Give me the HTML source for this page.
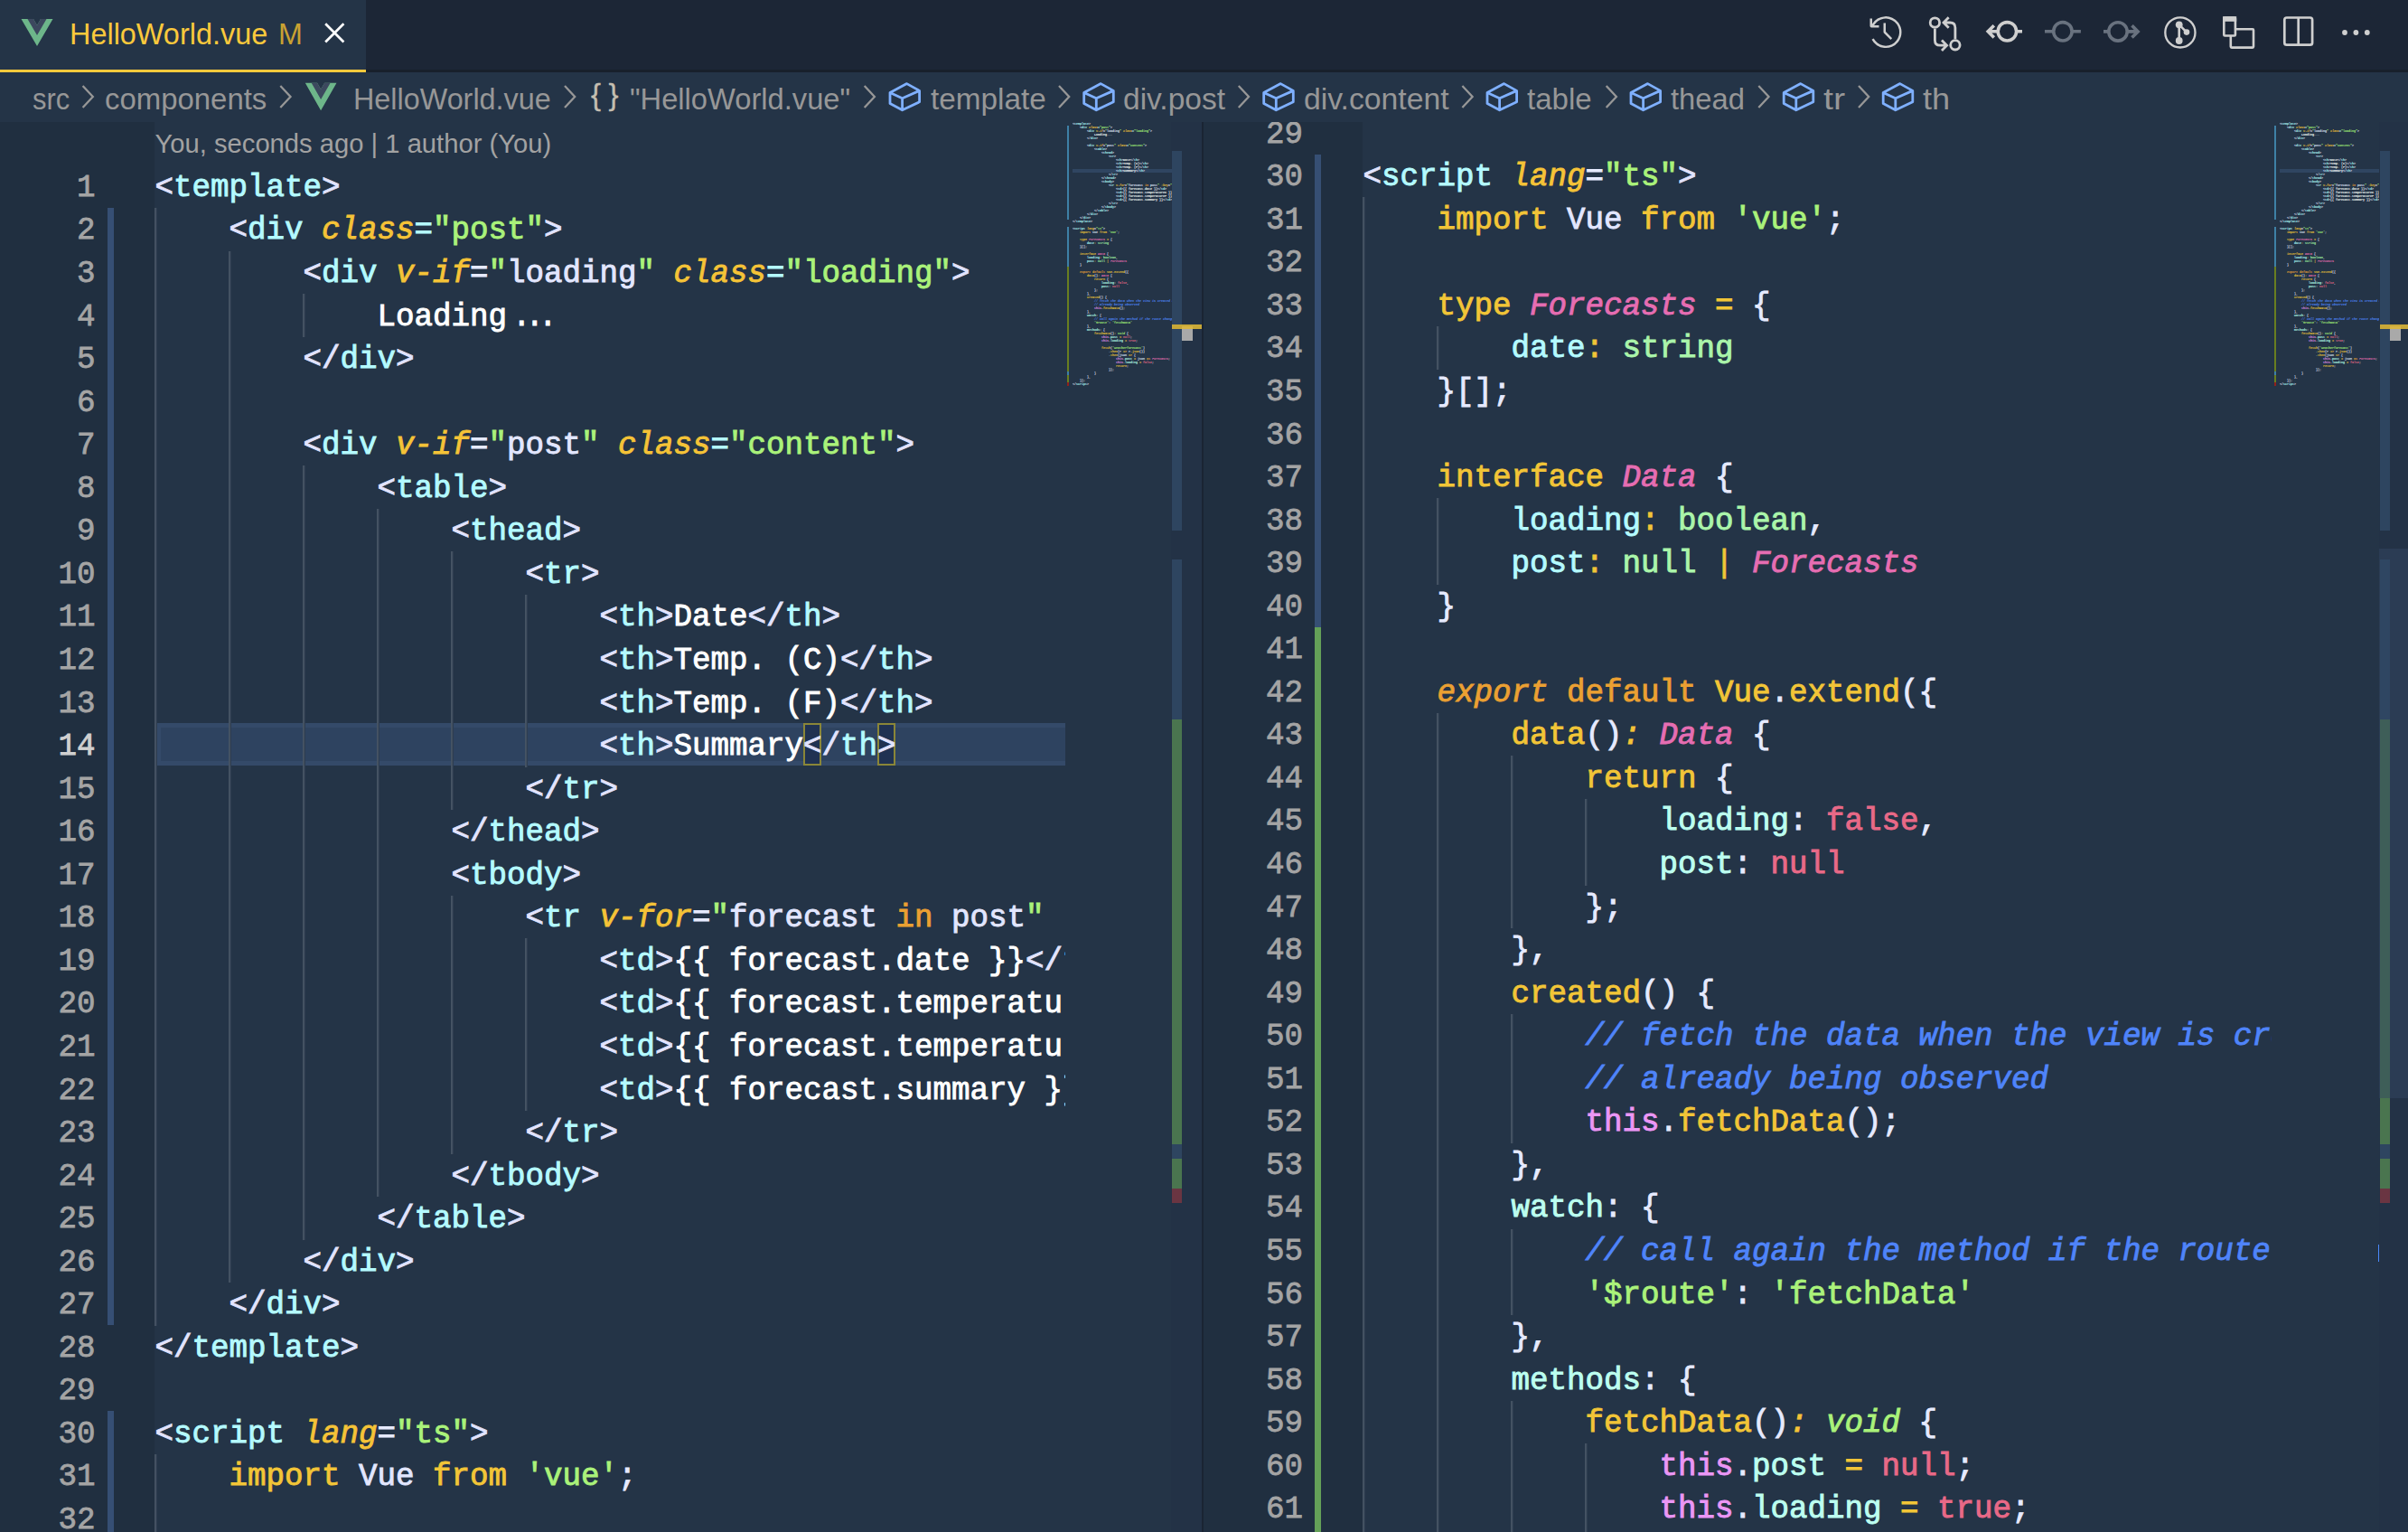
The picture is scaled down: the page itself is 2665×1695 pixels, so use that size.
<!DOCTYPE html><html><head><meta charset="utf-8"><title>HelloWorld.vue</title><style>
*{margin:0;padding:0;box-sizing:border-box}
html,body{width:2665px;height:1695px;overflow:hidden;background:#243447}
body{position:relative;font-family:"Liberation Sans",sans-serif}
.abs{position:absolute}
#tabbar{position:absolute;left:0;top:0;width:2665px;height:80px;background:#1c2636;border-bottom:3px solid #18202c}
#tab{position:absolute;left:0;top:0;width:405px;height:80px;background:#243447;border-bottom:3px solid #fbc93c}
#bc{position:absolute;left:0;top:80px;width:2665px;height:55px;background:#243447}
.ui{position:absolute;white-space:pre;transform-origin:0 50%;font-size:34px;line-height:40px;height:40px;color:#9a9a9a}
#ed{position:absolute;left:0;top:135px;width:2665px;height:1560px;overflow:hidden}
#ed>.in{position:absolute;left:0;top:-135px;width:2665px;height:1695px}
.gut{position:absolute;top:135px;height:1560px;background:#202f40}
.ln{position:absolute;height:47.55px;line-height:47.55px;padding-top:2.5px;-webkit-text-stroke:0.8px;text-align:right;font-family:"Liberation Mono",monospace;font-size:34.17px;color:#a4a4a4;white-space:pre}
.ln.act{color:#d0d0d0}
.gb{position:absolute}
.code{position:absolute;top:135px;height:1560px;overflow:hidden;font-family:"Liberation Mono",monospace;font-size:34.17px;color:#fff}
.cl{position:absolute;left:0.5px;height:47.55px;line-height:47.55px;white-space:pre;padding-top:2.5px;-webkit-text-stroke:0.9px}
.ig{position:absolute;width:3px;height:48.25px;background:linear-gradient(to right,#465464 0 1px,#414f60 1px 2px,#2e3d50 2px 3px)}
.hl{position:absolute;left:2px;right:0;height:47px;background:#2e4360;border:5px solid #344a69;border-right:none}
.bm{position:absolute;width:20px;height:47px;border:2px solid #8a8638;background:#203252}
.p{color:#e2e4ff} .t{color:#b4faff} .pr{color:#bcfff0} .a{color:#f5c337;font-style:italic} .s{color:#aaf27a} .w{color:#e6eaff} .x{color:#fff} .e{color:#e2e6ff}
.k{color:#f2c537} .o{color:#eba032} .oi{color:#eba032;font-style:italic} .ty{color:#e66db2;font-style:italic}
.bt{color:#aaf5aa} .c{color:#e86987} .th{color:#eb96f5} .cm{color:#4f84fa;font-style:italic} .vi{color:#aaf27a;font-style:italic}
.dots{letter-spacing:-6px;padding-left:6px}
.mm{position:absolute;height:1560px;overflow:hidden}
.mmi{position:absolute;left:0;top:0;transform-origin:0 0;transform:scale(0.09756,0.08412);font-family:"Liberation Mono",monospace;font-size:34.17px;font-weight:bold;color:#fff;width:2000px}
.ml{height:47.55px;line-height:47.55px;white-space:pre}
</style></head><body>
<div id="tabbar"></div><div id="tab"></div><div id="bc"></div>
<div class="ui" style="left:77.1px;top:17.1px;color:#fbc93c;transform:scaleX(0.9533)">HelloWorld.vue</div>
<div class="ui" style="left:307.8px;top:17.1px;color:#c9a232;transform:scaleX(0.9483)">M</div>
<div class="ui" style="left:35.8px;top:88.8px;color:#979797;transform:scaleX(0.9080)">src</div>
<div class="ui" style="left:116.1px;top:88.8px;color:#979797;transform:scaleX(0.9681)">components</div>
<div class="ui" style="left:391.2px;top:88.8px;color:#979797;transform:scaleX(0.9511)">HelloWorld.vue</div>
<div class="ui" style="left:697.2px;top:88.8px;color:#979797;transform:scaleX(0.9608)">&quot;HelloWorld.vue&quot;</div>
<div class="ui" style="left:1029.5px;top:88.8px;color:#979797;transform:scaleX(0.9796)">template</div>
<div class="ui" style="left:1243.2px;top:88.8px;color:#979797;transform:scaleX(0.9861)">div.post</div>
<div class="ui" style="left:1442.7px;top:88.8px;color:#979797;transform:scaleX(0.9917)">div.content</div>
<div class="ui" style="left:1690.3px;top:88.8px;color:#979797;transform:scaleX(0.9715)">table</div>
<div class="ui" style="left:1849.3px;top:88.8px;color:#979797;transform:scaleX(0.9625)">thead</div>
<div class="ui" style="left:2018.0px;top:88.8px;color:#979797;transform:scaleX(1.1606)">tr</div>
<div class="ui" style="left:2127.6px;top:88.8px;color:#979797;transform:scaleX(1.0637)">th</div>
<div class="ui" style="left:654px;top:84.5px;color:#c4beb0;letter-spacing:8.5px;font-size:33px;-webkit-text-stroke:0.35px">{}</div>
<svg class="abs" style="left:0;top:0" width="2665" height="135" viewBox="0 0 2665 135" fill="none" stroke-linecap="butt" stroke-linejoin="miter">
<path d="M45.0,21.0 L41.0,27.9 L37.0,21.0 L23.5,21.0 L41.0,51.0 L58.5,21.0 Z" fill="#6db68a"/><path d="M45.0,21.0 L41.0,27.9 L37.0,21.0 L30.5,21.0 L41.0,39.0 L51.5,21.0 Z" fill="#3c485e"/>
<path d="M359.2,91.8 L355.1,98.8 L351.1,91.8 L337.8,91.8 L355.1,122.2 L372.5,91.8 Z" fill="#6db68a"/><path d="M359.2,91.8 L355.1,98.8 L351.1,91.8 L344.7,91.8 L355.1,110.0 L365.6,91.8 Z" fill="#3c485e"/>
<path d="M360.2,26.3 L380.4,46.5 M380.4,26.3 L360.2,46.5" stroke="#fff" stroke-width="2.7"/>
<path d="M91.6,95 L102.8,107 L91.6,119" stroke="#979797" stroke-width="2.3"/>
<path d="M310.3,95 L321.5,107 L310.3,119" stroke="#979797" stroke-width="2.3"/>
<path d="M625.0,95 L636.2,107 L625.0,119" stroke="#979797" stroke-width="2.3"/>
<path d="M956.7,95 L967.9,107 L956.7,119" stroke="#979797" stroke-width="2.3"/>
<path d="M1172.0,95 L1183.2,107 L1172.0,119" stroke="#979797" stroke-width="2.3"/>
<path d="M1370.8,95 L1382.0,107 L1370.8,119" stroke="#979797" stroke-width="2.3"/>
<path d="M1618.4,95 L1629.6,107 L1618.4,119" stroke="#979797" stroke-width="2.3"/>
<path d="M1777.7,95 L1788.9,107 L1777.7,119" stroke="#979797" stroke-width="2.3"/>
<path d="M1946.3,95 L1957.5,107 L1946.3,119" stroke="#979797" stroke-width="2.3"/>
<path d="M2057.0,95 L2068.2,107 L2057.0,119" stroke="#979797" stroke-width="2.3"/>
<path d="M1003.6,92.6 L1017.6,100.4 L1017.6,112.8 L998.6,121.8 L985.0,114.5 L985.0,102.4 Z M985.0,102.4 L998.6,108.7 L1017.6,100.4 M998.6,108.7 L998.6,121.8" stroke="#7fb0ff" stroke-width="2.8" stroke-linejoin="round"/>
<path d="M1218.3,92.6 L1232.3,100.4 L1232.3,112.8 L1213.3,121.8 L1199.7,114.5 L1199.7,102.4 Z M1199.7,102.4 L1213.3,108.7 L1232.3,100.4 M1213.3,108.7 L1213.3,121.8" stroke="#7fb0ff" stroke-width="2.8" stroke-linejoin="round"/>
<path d="M1417.3,92.6 L1431.3,100.4 L1431.3,112.8 L1412.3,121.8 L1398.7,114.5 L1398.7,102.4 Z M1398.7,102.4 L1412.3,108.7 L1431.3,100.4 M1412.3,108.7 L1412.3,121.8" stroke="#7fb0ff" stroke-width="2.8" stroke-linejoin="round"/>
<path d="M1664.6,92.6 L1678.6,100.4 L1678.6,112.8 L1659.6,121.8 L1646.0,114.5 L1646.0,102.4 Z M1646.0,102.4 L1659.6,108.7 L1678.6,100.4 M1659.6,108.7 L1659.6,121.8" stroke="#7fb0ff" stroke-width="2.8" stroke-linejoin="round"/>
<path d="M1823.6,92.6 L1837.6,100.4 L1837.6,112.8 L1818.6,121.8 L1805.0,114.5 L1805.0,102.4 Z M1805.0,102.4 L1818.6,108.7 L1837.6,100.4 M1818.6,108.7 L1818.6,121.8" stroke="#7fb0ff" stroke-width="2.8" stroke-linejoin="round"/>
<path d="M1992.8,92.6 L2006.8,100.4 L2006.8,112.8 L1987.8,121.8 L1974.2,114.5 L1974.2,102.4 Z M1974.2,102.4 L1987.8,108.7 L2006.8,100.4 M1987.8,108.7 L1987.8,121.8" stroke="#7fb0ff" stroke-width="2.8" stroke-linejoin="round"/>
<path d="M2102.8,92.6 L2116.8,100.4 L2116.8,112.8 L2097.8,121.8 L2084.2,114.5 L2084.2,102.4 Z M2084.2,102.4 L2097.8,108.7 L2116.8,100.4 M2097.8,108.7 L2097.8,121.8" stroke="#7fb0ff" stroke-width="2.8" stroke-linejoin="round"/>
<g transform="translate(2067.0,15.6) scale(2.5)"><path fill="#cfcfcf" fill-rule="evenodd" d="M13.507 12.324a7 7 0 0 0 .065-8.56A7 7 0 0 0 2 4.393V2H1v3.5l.5.5H5V5H2.811a6.008 6.008 0 1 1-.135 5.77l-.887.462a7 7 0 0 0 11.718 1.092zm-3.361-.97l.708-.707L8 7.792V4H7v4l.146.354 3 3z"/></g>
<g stroke="#cfcfcf" stroke-width="2.8"><circle cx="2141.4" cy="25" r="5.2"/><circle cx="2163.9" cy="49.8" r="5.2"/><path d="M2141.4,31.6 L2141.4,44.5 Q2141.4,50.2 2147.1,50.2 L2154.3,50.2 M2149.0,44.5 L2154.6,50.2 L2149.0,55.9"/><path d="M2163.9,43.2 L2163.9,30.7 Q2163.9,25.0 2158.1,25.0 L2151.4,25.0 M2156.7,19.3 L2151.0,25.0 L2156.7,30.7"/></g>
<g stroke="#cfcfcf" stroke-width="3.6"><circle cx="2221.4" cy="34.8" r="10.2"/><path d="M2231.6,34.8 L2238,34.8 M2211.2,34.8 L2201,34.8 M2206.8,28.2 L2200.2,34.8 L2206.8,41.4"/></g>
<g stroke="#69727f" stroke-width="3.6"><circle cx="2282.9" cy="34.8" r="10.2"/><path d="M2263,34.8 L2272.7,34.8 M2293.1,34.8 L2302.9,34.8"/></g>
<g stroke="#69727f" stroke-width="3.6"><circle cx="2344" cy="34.9" r="10.2"/><path d="M2328,34.9 L2333.8,34.9 M2354.2,34.9 L2365.3,34.9 M2359.5,28.3 L2366.1,34.9 L2359.5,41.5"/></g>
<g stroke="#cfcfcf"><circle cx="2412.9" cy="35.9" r="16.6" stroke-width="2.3"/><path d="M2411.7,27.3 L2411.7,45 M2411.7,27.3 L2420,35.6" stroke-width="2.6"/></g><circle cx="2411.7" cy="27.3" r="3.9" fill="#cfcfcf"/><circle cx="2420" cy="35.6" r="3.3" fill="#cfcfcf"/><circle cx="2411.7" cy="45" r="3.9" fill="#cfcfcf"/>
<rect x="2468.8" y="32.3" width="25.2" height="20.3" stroke="#cfcfcf" stroke-width="2.6" rx="1"/><rect x="2461.3" y="19.5" width="12.6" height="20" stroke="#cfcfcf" stroke-width="2.6" fill="#1c2636" rx="1"/><rect x="2460" y="18.2" width="15.2" height="5.6" fill="#cfcfcf"/>
<rect x="2528.3" y="19.5" width="30.8" height="30.2" rx="2.5" stroke="#cfcfcf" stroke-width="2.7"/><path d="M2543.7,19.5 L2543.7,49.7" stroke="#cfcfcf" stroke-width="2.7"/>
<circle cx="2595" cy="36" r="2.9" fill="#cfcfcf"/>
<circle cx="2607.4" cy="36" r="2.9" fill="#cfcfcf"/>
<circle cx="2619.8" cy="36" r="2.9" fill="#cfcfcf"/>
</svg>
<div id="ed"><div class="in">
<div class="gut" style="left:0;width:171px"></div>
<div class="gut" style="left:1332px;width:175.6px"></div>
<div class="abs" style="left:1330px;top:135px;width:2px;height:1560px;background:#1a2433"></div>
<div class="ui" style="left:171.5px;top:139px;font-size:29.2px;color:#a2a2a2" id="lens">You, seconds ago | 1 author (You)</div>
<div class="ln" style="top:182.4px;left:0px;width:105.5px">1</div>
<div class="ln" style="top:229.9px;left:0px;width:105.5px">2</div>
<div class="ln" style="top:277.5px;left:0px;width:105.5px">3</div>
<div class="ln" style="top:325.0px;left:0px;width:105.5px">4</div>
<div class="ln" style="top:372.6px;left:0px;width:105.5px">5</div>
<div class="ln" style="top:420.1px;left:0px;width:105.5px">6</div>
<div class="ln" style="top:467.7px;left:0px;width:105.5px">7</div>
<div class="ln" style="top:515.2px;left:0px;width:105.5px">8</div>
<div class="ln" style="top:562.8px;left:0px;width:105.5px">9</div>
<div class="ln" style="top:610.4px;left:0px;width:105.5px">10</div>
<div class="ln" style="top:657.9px;left:0px;width:105.5px">11</div>
<div class="ln" style="top:705.4px;left:0px;width:105.5px">12</div>
<div class="ln" style="top:753.0px;left:0px;width:105.5px">13</div>
<div class="ln act" style="top:800.5px;left:0px;width:105.5px">14</div>
<div class="ln" style="top:848.1px;left:0px;width:105.5px">15</div>
<div class="ln" style="top:895.6px;left:0px;width:105.5px">16</div>
<div class="ln" style="top:943.2px;left:0px;width:105.5px">17</div>
<div class="ln" style="top:990.7px;left:0px;width:105.5px">18</div>
<div class="ln" style="top:1038.3px;left:0px;width:105.5px">19</div>
<div class="ln" style="top:1085.8px;left:0px;width:105.5px">20</div>
<div class="ln" style="top:1133.4px;left:0px;width:105.5px">21</div>
<div class="ln" style="top:1181.0px;left:0px;width:105.5px">22</div>
<div class="ln" style="top:1228.5px;left:0px;width:105.5px">23</div>
<div class="ln" style="top:1276.0px;left:0px;width:105.5px">24</div>
<div class="ln" style="top:1323.6px;left:0px;width:105.5px">25</div>
<div class="ln" style="top:1371.2px;left:0px;width:105.5px">26</div>
<div class="ln" style="top:1418.7px;left:0px;width:105.5px">27</div>
<div class="ln" style="top:1466.2px;left:0px;width:105.5px">28</div>
<div class="ln" style="top:1513.8px;left:0px;width:105.5px">29</div>
<div class="ln" style="top:1561.3px;left:0px;width:105.5px">30</div>
<div class="ln" style="top:1608.9px;left:0px;width:105.5px">31</div>
<div class="ln" style="top:1656.5px;left:0px;width:105.5px">32</div>
<div class="gb" style="left:119px;width:7px;top:229.9px;height:1236.3px;background:#364f74"></div>
<div class="gb" style="left:119px;width:7px;top:1561.3px;height:142.6px;background:#364f74"></div>
<div class="code" style="left:171.0px;width:1008.0px">
<div class="hl" style="top:665px"></div><i class="bm" style="left:718px;top:665px"></i><i class="bm" style="left:800px;top:665px"></i>
<div class="cl" style="top:47.4px"><span class="p">&lt;</span><span class="t">template</span><span class="p">&gt;</span></div>
<i class="ig" style="left:0.0px;top:94.9px"></i>
<div class="cl" style="top:94.9px">    <span class="p">&lt;</span><span class="t">div</span> <span class="a">class</span><span class="t">=</span><span class="s">"post"</span><span class="p">&gt;</span></div>
<i class="ig" style="left:0.0px;top:142.5px"></i>
<i class="ig" style="left:82.0px;top:142.5px"></i>
<div class="cl" style="top:142.5px">        <span class="p">&lt;</span><span class="t">div</span> <span class="a">v-if</span><span class="w">=</span><span class="s">"</span><span class="e">loading</span><span class="s">"</span> <span class="a">class</span><span class="t">=</span><span class="s">"loading"</span><span class="p">&gt;</span></div>
<i class="ig" style="left:0.0px;top:190.0px"></i>
<i class="ig" style="left:82.0px;top:190.0px"></i>
<i class="ig" style="left:164.0px;top:190.0px"></i>
<div class="cl" style="top:190.0px">            <span class="x">Loading</span><span class="x dots">...</span></div>
<i class="ig" style="left:0.0px;top:237.6px"></i>
<i class="ig" style="left:82.0px;top:237.6px"></i>
<div class="cl" style="top:237.6px">        <span class="p">&lt;/</span><span class="t">div</span><span class="p">&gt;</span></div>
<i class="ig" style="left:0.0px;top:285.1px"></i>
<i class="ig" style="left:82.0px;top:285.1px"></i>
<i class="ig" style="left:0.0px;top:332.7px"></i>
<i class="ig" style="left:82.0px;top:332.7px"></i>
<div class="cl" style="top:332.7px">        <span class="p">&lt;</span><span class="t">div</span> <span class="a">v-if</span><span class="w">=</span><span class="s">"</span><span class="e">post</span><span class="s">"</span> <span class="a">class</span><span class="t">=</span><span class="s">"content"</span><span class="p">&gt;</span></div>
<i class="ig" style="left:0.0px;top:380.2px"></i>
<i class="ig" style="left:82.0px;top:380.2px"></i>
<i class="ig" style="left:164.0px;top:380.2px"></i>
<div class="cl" style="top:380.2px">            <span class="p">&lt;</span><span class="t">table</span><span class="p">&gt;</span></div>
<i class="ig" style="left:0.0px;top:427.8px"></i>
<i class="ig" style="left:82.0px;top:427.8px"></i>
<i class="ig" style="left:164.0px;top:427.8px"></i>
<i class="ig" style="left:246.0px;top:427.8px"></i>
<div class="cl" style="top:427.8px">                <span class="p">&lt;</span><span class="t">thead</span><span class="p">&gt;</span></div>
<i class="ig" style="left:0.0px;top:475.4px"></i>
<i class="ig" style="left:82.0px;top:475.4px"></i>
<i class="ig" style="left:164.0px;top:475.4px"></i>
<i class="ig" style="left:246.0px;top:475.4px"></i>
<i class="ig" style="left:328.0px;top:475.4px"></i>
<div class="cl" style="top:475.4px">                    <span class="p">&lt;</span><span class="t">tr</span><span class="p">&gt;</span></div>
<i class="ig" style="left:0.0px;top:522.9px"></i>
<i class="ig" style="left:82.0px;top:522.9px"></i>
<i class="ig" style="left:164.0px;top:522.9px"></i>
<i class="ig" style="left:246.0px;top:522.9px"></i>
<i class="ig" style="left:328.0px;top:522.9px"></i>
<i class="ig" style="left:410.0px;top:522.9px"></i>
<div class="cl" style="top:522.9px">                        <span class="p">&lt;</span><span class="t">th</span><span class="p">&gt;</span><span class="x">Date</span><span class="p">&lt;/</span><span class="t">th</span><span class="p">&gt;</span></div>
<i class="ig" style="left:0.0px;top:570.4px"></i>
<i class="ig" style="left:82.0px;top:570.4px"></i>
<i class="ig" style="left:164.0px;top:570.4px"></i>
<i class="ig" style="left:246.0px;top:570.4px"></i>
<i class="ig" style="left:328.0px;top:570.4px"></i>
<i class="ig" style="left:410.0px;top:570.4px"></i>
<div class="cl" style="top:570.4px">                        <span class="p">&lt;</span><span class="t">th</span><span class="p">&gt;</span><span class="x">Temp. (C)</span><span class="p">&lt;/</span><span class="t">th</span><span class="p">&gt;</span></div>
<i class="ig" style="left:0.0px;top:618.0px"></i>
<i class="ig" style="left:82.0px;top:618.0px"></i>
<i class="ig" style="left:164.0px;top:618.0px"></i>
<i class="ig" style="left:246.0px;top:618.0px"></i>
<i class="ig" style="left:328.0px;top:618.0px"></i>
<i class="ig" style="left:410.0px;top:618.0px"></i>
<div class="cl" style="top:618.0px">                        <span class="p">&lt;</span><span class="t">th</span><span class="p">&gt;</span><span class="x">Temp. (F)</span><span class="p">&lt;/</span><span class="t">th</span><span class="p">&gt;</span></div>
<i class="ig" style="left:0.0px;top:665.5px"></i>
<i class="ig" style="left:82.0px;top:665.5px"></i>
<i class="ig" style="left:164.0px;top:665.5px"></i>
<i class="ig" style="left:246.0px;top:665.5px"></i>
<i class="ig" style="left:328.0px;top:665.5px"></i>
<i class="ig" style="left:410.0px;top:665.5px"></i>
<div class="cl" style="top:665.5px">                        <span class="p">&lt;</span><span class="t">th</span><span class="p">&gt;</span><span class="x">Summary</span><span class="p">&lt;/</span><span class="t">th</span><span class="p">&gt;</span></div>
<i class="ig" style="left:0.0px;top:713.1px"></i>
<i class="ig" style="left:82.0px;top:713.1px"></i>
<i class="ig" style="left:164.0px;top:713.1px"></i>
<i class="ig" style="left:246.0px;top:713.1px"></i>
<i class="ig" style="left:328.0px;top:713.1px"></i>
<div class="cl" style="top:713.1px">                    <span class="p">&lt;/</span><span class="t">tr</span><span class="p">&gt;</span></div>
<i class="ig" style="left:0.0px;top:760.6px"></i>
<i class="ig" style="left:82.0px;top:760.6px"></i>
<i class="ig" style="left:164.0px;top:760.6px"></i>
<i class="ig" style="left:246.0px;top:760.6px"></i>
<div class="cl" style="top:760.6px">                <span class="p">&lt;/</span><span class="t">thead</span><span class="p">&gt;</span></div>
<i class="ig" style="left:0.0px;top:808.2px"></i>
<i class="ig" style="left:82.0px;top:808.2px"></i>
<i class="ig" style="left:164.0px;top:808.2px"></i>
<i class="ig" style="left:246.0px;top:808.2px"></i>
<div class="cl" style="top:808.2px">                <span class="p">&lt;</span><span class="t">tbody</span><span class="p">&gt;</span></div>
<i class="ig" style="left:0.0px;top:855.7px"></i>
<i class="ig" style="left:82.0px;top:855.7px"></i>
<i class="ig" style="left:164.0px;top:855.7px"></i>
<i class="ig" style="left:246.0px;top:855.7px"></i>
<i class="ig" style="left:328.0px;top:855.7px"></i>
<div class="cl" style="top:855.7px">                    <span class="p">&lt;</span><span class="t">tr</span> <span class="a">v-for</span><span class="w">=</span><span class="s">"</span><span class="e">forecast </span><span class="o">in</span><span class="e"> post</span><span class="s">"</span> <span class="a">:key</span><span class="w">=</span><span class="s">"</span><span class="e">forecast.date</span><span class="s">"</span><span class="p">&gt;</span></div>
<i class="ig" style="left:0.0px;top:903.3px"></i>
<i class="ig" style="left:82.0px;top:903.3px"></i>
<i class="ig" style="left:164.0px;top:903.3px"></i>
<i class="ig" style="left:246.0px;top:903.3px"></i>
<i class="ig" style="left:328.0px;top:903.3px"></i>
<i class="ig" style="left:410.0px;top:903.3px"></i>
<div class="cl" style="top:903.3px">                        <span class="p">&lt;</span><span class="t">td</span><span class="p">&gt;</span><span class="x">{{ forecast.date }}</span><span class="p">&lt;/</span><span class="t">td</span><span class="p">&gt;</span></div>
<i class="ig" style="left:0.0px;top:950.8px"></i>
<i class="ig" style="left:82.0px;top:950.8px"></i>
<i class="ig" style="left:164.0px;top:950.8px"></i>
<i class="ig" style="left:246.0px;top:950.8px"></i>
<i class="ig" style="left:328.0px;top:950.8px"></i>
<i class="ig" style="left:410.0px;top:950.8px"></i>
<div class="cl" style="top:950.8px">                        <span class="p">&lt;</span><span class="t">td</span><span class="p">&gt;</span><span class="x">{{ forecast.temperatureC }}</span><span class="p">&lt;/</span><span class="t">td</span><span class="p">&gt;</span></div>
<i class="ig" style="left:0.0px;top:998.4px"></i>
<i class="ig" style="left:82.0px;top:998.4px"></i>
<i class="ig" style="left:164.0px;top:998.4px"></i>
<i class="ig" style="left:246.0px;top:998.4px"></i>
<i class="ig" style="left:328.0px;top:998.4px"></i>
<i class="ig" style="left:410.0px;top:998.4px"></i>
<div class="cl" style="top:998.4px">                        <span class="p">&lt;</span><span class="t">td</span><span class="p">&gt;</span><span class="x">{{ forecast.temperatureF }}</span><span class="p">&lt;/</span><span class="t">td</span><span class="p">&gt;</span></div>
<i class="ig" style="left:0.0px;top:1046.0px"></i>
<i class="ig" style="left:82.0px;top:1046.0px"></i>
<i class="ig" style="left:164.0px;top:1046.0px"></i>
<i class="ig" style="left:246.0px;top:1046.0px"></i>
<i class="ig" style="left:328.0px;top:1046.0px"></i>
<i class="ig" style="left:410.0px;top:1046.0px"></i>
<div class="cl" style="top:1046.0px">                        <span class="p">&lt;</span><span class="t">td</span><span class="p">&gt;</span><span class="x">{{ forecast.summary }}</span><span class="p">&lt;/</span><span class="t">td</span><span class="p">&gt;</span></div>
<i class="ig" style="left:0.0px;top:1093.5px"></i>
<i class="ig" style="left:82.0px;top:1093.5px"></i>
<i class="ig" style="left:164.0px;top:1093.5px"></i>
<i class="ig" style="left:246.0px;top:1093.5px"></i>
<i class="ig" style="left:328.0px;top:1093.5px"></i>
<div class="cl" style="top:1093.5px">                    <span class="p">&lt;/</span><span class="t">tr</span><span class="p">&gt;</span></div>
<i class="ig" style="left:0.0px;top:1141.0px"></i>
<i class="ig" style="left:82.0px;top:1141.0px"></i>
<i class="ig" style="left:164.0px;top:1141.0px"></i>
<i class="ig" style="left:246.0px;top:1141.0px"></i>
<div class="cl" style="top:1141.0px">                <span class="p">&lt;/</span><span class="t">tbody</span><span class="p">&gt;</span></div>
<i class="ig" style="left:0.0px;top:1188.6px"></i>
<i class="ig" style="left:82.0px;top:1188.6px"></i>
<i class="ig" style="left:164.0px;top:1188.6px"></i>
<div class="cl" style="top:1188.6px">            <span class="p">&lt;/</span><span class="t">table</span><span class="p">&gt;</span></div>
<i class="ig" style="left:0.0px;top:1236.2px"></i>
<i class="ig" style="left:82.0px;top:1236.2px"></i>
<div class="cl" style="top:1236.2px">        <span class="p">&lt;/</span><span class="t">div</span><span class="p">&gt;</span></div>
<i class="ig" style="left:0.0px;top:1283.7px"></i>
<div class="cl" style="top:1283.7px">    <span class="p">&lt;/</span><span class="t">div</span><span class="p">&gt;</span></div>
<div class="cl" style="top:1331.2px"><span class="p">&lt;/</span><span class="t">template</span><span class="p">&gt;</span></div>
<div class="cl" style="top:1426.3px"><span class="p">&lt;</span><span class="t">script</span> <span class="a">lang</span><span class="w">=</span><span class="s">"ts"</span><span class="p">&gt;</span></div>
<i class="ig" style="left:0.0px;top:1473.9px"></i>
<div class="cl" style="top:1473.9px">    <span class="k">import</span> <span class="e">Vue</span> <span class="k">from</span> <span class="s">'vue'</span><span class="w">;</span></div>
<i class="ig" style="left:0.0px;top:1521.5px"></i>
</div>
<div class="ln" style="top:123.1px;left:1332px;width:110px">29</div>
<div class="ln" style="top:170.7px;left:1332px;width:110px">30</div>
<div class="ln" style="top:218.2px;left:1332px;width:110px">31</div>
<div class="ln" style="top:265.8px;left:1332px;width:110px">32</div>
<div class="ln" style="top:313.3px;left:1332px;width:110px">33</div>
<div class="ln" style="top:360.9px;left:1332px;width:110px">34</div>
<div class="ln" style="top:408.4px;left:1332px;width:110px">35</div>
<div class="ln" style="top:456.0px;left:1332px;width:110px">36</div>
<div class="ln" style="top:503.5px;left:1332px;width:110px">37</div>
<div class="ln" style="top:551.1px;left:1332px;width:110px">38</div>
<div class="ln" style="top:598.6px;left:1332px;width:110px">39</div>
<div class="ln" style="top:646.2px;left:1332px;width:110px">40</div>
<div class="ln" style="top:693.7px;left:1332px;width:110px">41</div>
<div class="ln" style="top:741.3px;left:1332px;width:110px">42</div>
<div class="ln" style="top:788.8px;left:1332px;width:110px">43</div>
<div class="ln" style="top:836.4px;left:1332px;width:110px">44</div>
<div class="ln" style="top:883.9px;left:1332px;width:110px">45</div>
<div class="ln" style="top:931.5px;left:1332px;width:110px">46</div>
<div class="ln" style="top:979.0px;left:1332px;width:110px">47</div>
<div class="ln" style="top:1026.6px;left:1332px;width:110px">48</div>
<div class="ln" style="top:1074.2px;left:1332px;width:110px">49</div>
<div class="ln" style="top:1121.7px;left:1332px;width:110px">50</div>
<div class="ln" style="top:1169.2px;left:1332px;width:110px">51</div>
<div class="ln" style="top:1216.8px;left:1332px;width:110px">52</div>
<div class="ln" style="top:1264.3px;left:1332px;width:110px">53</div>
<div class="ln" style="top:1311.9px;left:1332px;width:110px">54</div>
<div class="ln" style="top:1359.5px;left:1332px;width:110px">55</div>
<div class="ln" style="top:1407.0px;left:1332px;width:110px">56</div>
<div class="ln" style="top:1454.5px;left:1332px;width:110px">57</div>
<div class="ln" style="top:1502.1px;left:1332px;width:110px">58</div>
<div class="ln" style="top:1549.7px;left:1332px;width:110px">59</div>
<div class="ln" style="top:1597.2px;left:1332px;width:110px">60</div>
<div class="ln" style="top:1644.8px;left:1332px;width:110px">61</div>
<div class="ln" style="top:1692.3px;left:1332px;width:110px">62</div>
<div class="gb" style="left:1455px;width:7px;top:170.7px;height:523.0px;background:#364f74"></div>
<div class="gb" style="left:1455px;width:7px;top:693.7px;height:1046.1px;background:#64a058"></div>
<div class="code" style="left:1508.0px;width:1006.0px">

<div class="cl" style="top:35.7px"><span class="p">&lt;</span><span class="t">script</span> <span class="a">lang</span><span class="w">=</span><span class="s">"ts"</span><span class="p">&gt;</span></div>
<i class="ig" style="left:0.0px;top:83.2px"></i>
<div class="cl" style="top:83.2px">    <span class="k">import</span> <span class="e">Vue</span> <span class="k">from</span> <span class="s">'vue'</span><span class="w">;</span></div>
<i class="ig" style="left:0.0px;top:130.8px"></i>
<i class="ig" style="left:0.0px;top:178.3px"></i>
<div class="cl" style="top:178.3px">    <span class="k">type</span> <span class="ty">Forecasts</span> <span class="k">=</span> <span class="w">{</span></div>
<i class="ig" style="left:0.0px;top:225.9px"></i>
<i class="ig" style="left:82.0px;top:225.9px"></i>
<div class="cl" style="top:225.9px">        <span class="t">date</span><span class="k">:</span> <span class="bt">string</span></div>
<i class="ig" style="left:0.0px;top:273.4px"></i>
<div class="cl" style="top:273.4px">    <span class="w">}[];</span></div>
<i class="ig" style="left:0.0px;top:321.0px"></i>
<i class="ig" style="left:0.0px;top:368.5px"></i>
<div class="cl" style="top:368.5px">    <span class="k">interface</span> <span class="ty">Data</span> <span class="w">{</span></div>
<i class="ig" style="left:0.0px;top:416.1px"></i>
<i class="ig" style="left:82.0px;top:416.1px"></i>
<div class="cl" style="top:416.1px">        <span class="t">loading</span><span class="k">:</span> <span class="bt">boolean</span><span class="w">,</span></div>
<i class="ig" style="left:0.0px;top:463.6px"></i>
<i class="ig" style="left:82.0px;top:463.6px"></i>
<div class="cl" style="top:463.6px">        <span class="t">post</span><span class="k">:</span> <span class="bt">null</span> <span class="k">|</span> <span class="ty">Forecasts</span></div>
<i class="ig" style="left:0.0px;top:511.2px"></i>
<div class="cl" style="top:511.2px">    <span class="w">}</span></div>
<i class="ig" style="left:0.0px;top:558.7px"></i>
<i class="ig" style="left:0.0px;top:606.3px"></i>
<div class="cl" style="top:606.3px">    <span class="oi">export</span> <span class="o">default</span> <span class="k">Vue</span><span class="w">.</span><span class="k">extend</span><span class="w">({</span></div>
<i class="ig" style="left:0.0px;top:653.8px"></i>
<i class="ig" style="left:82.0px;top:653.8px"></i>
<div class="cl" style="top:653.8px">        <span class="k">data</span><span class="w">()</span><span class="a">:</span> <span class="ty">Data</span> <span class="w">{</span></div>
<i class="ig" style="left:0.0px;top:701.4px"></i>
<i class="ig" style="left:82.0px;top:701.4px"></i>
<i class="ig" style="left:164.0px;top:701.4px"></i>
<div class="cl" style="top:701.4px">            <span class="k">return</span> <span class="w">{</span></div>
<i class="ig" style="left:0.0px;top:748.9px"></i>
<i class="ig" style="left:82.0px;top:748.9px"></i>
<i class="ig" style="left:164.0px;top:748.9px"></i>
<i class="ig" style="left:246.0px;top:748.9px"></i>
<div class="cl" style="top:748.9px">                <span class="pr">loading</span><span class="w">:</span> <span class="c">false</span><span class="w">,</span></div>
<i class="ig" style="left:0.0px;top:796.5px"></i>
<i class="ig" style="left:82.0px;top:796.5px"></i>
<i class="ig" style="left:164.0px;top:796.5px"></i>
<i class="ig" style="left:246.0px;top:796.5px"></i>
<div class="cl" style="top:796.5px">                <span class="pr">post</span><span class="w">:</span> <span class="c">null</span></div>
<i class="ig" style="left:0.0px;top:844.0px"></i>
<i class="ig" style="left:82.0px;top:844.0px"></i>
<i class="ig" style="left:164.0px;top:844.0px"></i>
<div class="cl" style="top:844.0px">            <span class="w">};</span></div>
<i class="ig" style="left:0.0px;top:891.6px"></i>
<i class="ig" style="left:82.0px;top:891.6px"></i>
<div class="cl" style="top:891.6px">        <span class="w">},</span></div>
<i class="ig" style="left:0.0px;top:939.2px"></i>
<i class="ig" style="left:82.0px;top:939.2px"></i>
<div class="cl" style="top:939.2px">        <span class="k">created</span><span class="w">() {</span></div>
<i class="ig" style="left:0.0px;top:986.7px"></i>
<i class="ig" style="left:82.0px;top:986.7px"></i>
<i class="ig" style="left:164.0px;top:986.7px"></i>
<div class="cl" style="top:986.7px">            <span class="cm">// fetch the data when the view is created and the data is</span></div>
<i class="ig" style="left:0.0px;top:1034.2px"></i>
<i class="ig" style="left:82.0px;top:1034.2px"></i>
<i class="ig" style="left:164.0px;top:1034.2px"></i>
<div class="cl" style="top:1034.2px">            <span class="cm">// already being observed</span></div>
<i class="ig" style="left:0.0px;top:1081.8px"></i>
<i class="ig" style="left:82.0px;top:1081.8px"></i>
<i class="ig" style="left:164.0px;top:1081.8px"></i>
<div class="cl" style="top:1081.8px">            <span class="th">this</span><span class="w">.</span><span class="k">fetchData</span><span class="w">();</span></div>
<i class="ig" style="left:0.0px;top:1129.3px"></i>
<i class="ig" style="left:82.0px;top:1129.3px"></i>
<div class="cl" style="top:1129.3px">        <span class="w">},</span></div>
<i class="ig" style="left:0.0px;top:1176.9px"></i>
<i class="ig" style="left:82.0px;top:1176.9px"></i>
<div class="cl" style="top:1176.9px">        <span class="pr">watch</span><span class="w">: {</span></div>
<i class="ig" style="left:0.0px;top:1224.5px"></i>
<i class="ig" style="left:82.0px;top:1224.5px"></i>
<i class="ig" style="left:164.0px;top:1224.5px"></i>
<div class="cl" style="top:1224.5px">            <span class="cm">// call again the method if the route changes</span></div>
<i class="ig" style="left:0.0px;top:1272.0px"></i>
<i class="ig" style="left:82.0px;top:1272.0px"></i>
<i class="ig" style="left:164.0px;top:1272.0px"></i>
<div class="cl" style="top:1272.0px">            <span class="s">'$route'</span><span class="w">:</span> <span class="s">'fetchData'</span></div>
<i class="ig" style="left:0.0px;top:1319.5px"></i>
<i class="ig" style="left:82.0px;top:1319.5px"></i>
<div class="cl" style="top:1319.5px">        <span class="w">},</span></div>
<i class="ig" style="left:0.0px;top:1367.1px"></i>
<i class="ig" style="left:82.0px;top:1367.1px"></i>
<div class="cl" style="top:1367.1px">        <span class="pr">methods</span><span class="w">: {</span></div>
<i class="ig" style="left:0.0px;top:1414.7px"></i>
<i class="ig" style="left:82.0px;top:1414.7px"></i>
<i class="ig" style="left:164.0px;top:1414.7px"></i>
<div class="cl" style="top:1414.7px">            <span class="k">fetchData</span><span class="w">()</span><span class="a">:</span> <span class="vi">void</span> <span class="w">{</span></div>
<i class="ig" style="left:0.0px;top:1462.2px"></i>
<i class="ig" style="left:82.0px;top:1462.2px"></i>
<i class="ig" style="left:164.0px;top:1462.2px"></i>
<i class="ig" style="left:246.0px;top:1462.2px"></i>
<div class="cl" style="top:1462.2px">                <span class="th">this</span><span class="w">.</span><span class="pr">post</span> <span class="k">=</span> <span class="c">null</span><span class="w">;</span></div>
<i class="ig" style="left:0.0px;top:1509.8px"></i>
<i class="ig" style="left:82.0px;top:1509.8px"></i>
<i class="ig" style="left:164.0px;top:1509.8px"></i>
<i class="ig" style="left:246.0px;top:1509.8px"></i>
<div class="cl" style="top:1509.8px">                <span class="th">this</span><span class="w">.</span><span class="pr">loading</span> <span class="k">=</span> <span class="c">true</span><span class="w">;</span></div>
<i class="ig" style="left:0.0px;top:1557.3px"></i>
<i class="ig" style="left:82.0px;top:1557.3px"></i>
<i class="ig" style="left:164.0px;top:1557.3px"></i>
<i class="ig" style="left:246.0px;top:1557.3px"></i>
</div>
<div class="abs" style="left:1181px;width:2px;top:139px;height:104px;background:#3e80a6"></div>
<div class="abs" style="left:1181px;width:2px;top:251px;height:44px;background:#3e80a6"></div>
<div class="abs" style="left:1181px;width:2px;top:295px;height:116px;background:#697e20"></div>
<div class="abs" style="left:1181px;width:2px;top:411px;height:4px;background:#3e80a6"></div>
<div class="abs" style="left:1181px;width:2px;top:415px;height:8px;background:#697e20"></div>
<div class="abs" style="left:1181px;width:2px;top:423px;height:4px;background:#90201c"></div>
<div class="abs" style="left:2517.3px;width:2px;top:139px;height:104px;background:#3e80a6"></div>
<div class="abs" style="left:2517.3px;width:2px;top:251px;height:44px;background:#3e80a6"></div>
<div class="abs" style="left:2517.3px;width:2px;top:295px;height:116px;background:#697e20"></div>
<div class="abs" style="left:2517.3px;width:2px;top:411px;height:4px;background:#3e80a6"></div>
<div class="abs" style="left:2517.3px;width:2px;top:415px;height:8px;background:#697e20"></div>
<div class="abs" style="left:2517.3px;width:2px;top:423px;height:4px;background:#90201c"></div>
<div class="abs" style="left:1295.6px;width:34.6px;top:135px;height:1560px;background:#233246"></div>
<div class="abs" style="left:1296.8px;width:11px;top:166.6px;height:420.0px;background:#2e4560"></div>
<div class="abs" style="left:1296.8px;width:11px;top:618.7px;height:177.69999999999993px;background:#2e4560"></div>
<div class="abs" style="left:1296.8px;width:11px;top:796.4px;height:469.30000000000007px;background:#4a754f"></div>
<div class="abs" style="left:1296.8px;width:11px;top:1265.7px;height:16.299999999999955px;background:#2e4560"></div>
<div class="abs" style="left:1296.8px;width:11px;top:1282px;height:32.700000000000045px;background:#4a754f"></div>
<div class="abs" style="left:1296.8px;width:11px;top:1314.7px;height:16.299999999999955px;background:#6a3542"></div>
<div class="abs" style="left:1296.8px;width:33.4px;top:359.2px;height:5px;background:#c8a838"></div>
<div class="abs" style="left:1307.8px;width:12px;top:361px;height:16px;background:#a9a9a9"></div>
<div class="abs" style="left:1307.8px;width:12px;top:360.5px;height:3.7px;background:#d8b544"></div>
<div class="abs" style="left:2632.8px;width:32.2px;top:135px;height:1560px;background:#233246"></div>
<div class="abs" style="left:2632.8px;width:32.2px;top:607px;height:607.8px;background:#2b3c54"></div>
<div class="abs" style="left:2634.0px;width:11px;top:166.6px;height:420.0px;background:#2e4560"></div>
<div class="abs" style="left:2634.0px;width:11px;top:618.7px;height:177.69999999999993px;background:#2f4662"></div>
<div class="abs" style="left:2634.0px;width:11px;top:796.4px;height:418.4px;background:#3e5e58"></div>
<div class="abs" style="left:2634.0px;width:11px;top:1214.8px;height:50.90000000000009px;background:#4a754f"></div>
<div class="abs" style="left:2634.0px;width:11px;top:1265.7px;height:16.299999999999955px;background:#2e4560"></div>
<div class="abs" style="left:2634.0px;width:11px;top:1282px;height:32.700000000000045px;background:#4a754f"></div>
<div class="abs" style="left:2634.0px;width:11px;top:1314.7px;height:16.299999999999955px;background:#6a3542"></div>
<div class="abs" style="left:2634.0px;width:31px;top:359.2px;height:5px;background:#c8a838"></div>
<div class="abs" style="left:2645.0px;width:12px;top:361px;height:16px;background:#a9a9a9"></div>
<div class="abs" style="left:2645.0px;width:12px;top:360.5px;height:3.7px;background:#d8b544"></div>
<div class="abs" style="left:2632px;width:1px;top:1377px;height:18.5px;background:#4a88f8"></div>
<div class="abs" style="left:1186.6px;top:187px;width:110px;height:4px;background:#2f4561"></div><div class="abs" style="left:2523.3px;top:187px;width:109.5px;height:4px;background:#2f4561"></div>
<div class="mm" style="left:1186.6px;top:135px;width:110px"><div class="mmi">
<div class="ml"><span class="p">&lt;</span><span class="t">template</span><span class="p">&gt;</span></div>
<div class="ml">    <span class="p">&lt;</span><span class="t">div</span> <span class="a">class</span><span class="t">=</span><span class="s">"post"</span><span class="p">&gt;</span></div>
<div class="ml">        <span class="p">&lt;</span><span class="t">div</span> <span class="a">v-if</span><span class="w">=</span><span class="s">"</span><span class="e">loading</span><span class="s">"</span> <span class="a">class</span><span class="t">=</span><span class="s">"loading"</span><span class="p">&gt;</span></div>
<div class="ml">            <span class="x">Loading</span><span class="w">...</span></div>
<div class="ml">        <span class="p">&lt;/</span><span class="t">div</span><span class="p">&gt;</span></div>
<div class="ml"> </div>
<div class="ml">        <span class="p">&lt;</span><span class="t">div</span> <span class="a">v-if</span><span class="w">=</span><span class="s">"</span><span class="e">post</span><span class="s">"</span> <span class="a">class</span><span class="t">=</span><span class="s">"content"</span><span class="p">&gt;</span></div>
<div class="ml">            <span class="p">&lt;</span><span class="t">table</span><span class="p">&gt;</span></div>
<div class="ml">                <span class="p">&lt;</span><span class="t">thead</span><span class="p">&gt;</span></div>
<div class="ml">                    <span class="p">&lt;</span><span class="t">tr</span><span class="p">&gt;</span></div>
<div class="ml">                        <span class="p">&lt;</span><span class="t">th</span><span class="p">&gt;</span><span class="x">Date</span><span class="p">&lt;/</span><span class="t">th</span><span class="p">&gt;</span></div>
<div class="ml">                        <span class="p">&lt;</span><span class="t">th</span><span class="p">&gt;</span><span class="x">Temp. (C)</span><span class="p">&lt;/</span><span class="t">th</span><span class="p">&gt;</span></div>
<div class="ml">                        <span class="p">&lt;</span><span class="t">th</span><span class="p">&gt;</span><span class="x">Temp. (F)</span><span class="p">&lt;/</span><span class="t">th</span><span class="p">&gt;</span></div>
<div class="ml">                        <span class="p">&lt;</span><span class="t">th</span><span class="p">&gt;</span><span class="x">Summary</span><span class="p">&lt;/</span><span class="t">th</span><span class="p">&gt;</span></div>
<div class="ml">                    <span class="p">&lt;/</span><span class="t">tr</span><span class="p">&gt;</span></div>
<div class="ml">                <span class="p">&lt;/</span><span class="t">thead</span><span class="p">&gt;</span></div>
<div class="ml">                <span class="p">&lt;</span><span class="t">tbody</span><span class="p">&gt;</span></div>
<div class="ml">                    <span class="p">&lt;</span><span class="t">tr</span> <span class="a">v-for</span><span class="w">=</span><span class="s">"</span><span class="e">forecast </span><span class="o">in</span><span class="e"> post</span><span class="s">"</span> <span class="a">:key</span><span class="w">=</span><span class="s">"</span><span class="e">forecast.date</span><span class="s">"</span><span class="p">&gt;</span></div>
<div class="ml">                        <span class="p">&lt;</span><span class="t">td</span><span class="p">&gt;</span><span class="x">{{ forecast.date }}</span><span class="p">&lt;/</span><span class="t">td</span><span class="p">&gt;</span></div>
<div class="ml">                        <span class="p">&lt;</span><span class="t">td</span><span class="p">&gt;</span><span class="x">{{ forecast.temperatureC }}</span><span class="p">&lt;/</span><span class="t">td</span><span class="p">&gt;</span></div>
<div class="ml">                        <span class="p">&lt;</span><span class="t">td</span><span class="p">&gt;</span><span class="x">{{ forecast.temperatureF }}</span><span class="p">&lt;/</span><span class="t">td</span><span class="p">&gt;</span></div>
<div class="ml">                        <span class="p">&lt;</span><span class="t">td</span><span class="p">&gt;</span><span class="x">{{ forecast.summary }}</span><span class="p">&lt;/</span><span class="t">td</span><span class="p">&gt;</span></div>
<div class="ml">                    <span class="p">&lt;/</span><span class="t">tr</span><span class="p">&gt;</span></div>
<div class="ml">                <span class="p">&lt;/</span><span class="t">tbody</span><span class="p">&gt;</span></div>
<div class="ml">            <span class="p">&lt;/</span><span class="t">table</span><span class="p">&gt;</span></div>
<div class="ml">        <span class="p">&lt;/</span><span class="t">div</span><span class="p">&gt;</span></div>
<div class="ml">    <span class="p">&lt;/</span><span class="t">div</span><span class="p">&gt;</span></div>
<div class="ml"><span class="p">&lt;/</span><span class="t">template</span><span class="p">&gt;</span></div>
<div class="ml"> </div>
<div class="ml"><span class="p">&lt;</span><span class="t">script</span> <span class="a">lang</span><span class="w">=</span><span class="s">"ts"</span><span class="p">&gt;</span></div>
<div class="ml">    <span class="k">import</span> <span class="e">Vue</span> <span class="k">from</span> <span class="s">'vue'</span><span class="w">;</span></div>
<div class="ml"> </div>
<div class="ml">    <span class="k">type</span> <span class="ty">Forecasts</span> <span class="k">=</span> <span class="w">{</span></div>
<div class="ml">        <span class="t">date</span><span class="k">:</span> <span class="bt">string</span></div>
<div class="ml">    <span class="w">}[];</span></div>
<div class="ml"> </div>
<div class="ml">    <span class="k">interface</span> <span class="ty">Data</span> <span class="w">{</span></div>
<div class="ml">        <span class="t">loading</span><span class="k">:</span> <span class="bt">boolean</span><span class="w">,</span></div>
<div class="ml">        <span class="t">post</span><span class="k">:</span> <span class="bt">null</span> <span class="k">|</span> <span class="ty">Forecasts</span></div>
<div class="ml">    <span class="w">}</span></div>
<div class="ml"> </div>
<div class="ml">    <span class="oi">export</span> <span class="o">default</span> <span class="k">Vue</span><span class="w">.</span><span class="k">extend</span><span class="w">({</span></div>
<div class="ml">        <span class="k">data</span><span class="w">()</span><span class="a">:</span> <span class="ty">Data</span> <span class="w">{</span></div>
<div class="ml">            <span class="k">return</span> <span class="w">{</span></div>
<div class="ml">                <span class="pr">loading</span><span class="w">:</span> <span class="c">false</span><span class="w">,</span></div>
<div class="ml">                <span class="pr">post</span><span class="w">:</span> <span class="c">null</span></div>
<div class="ml">            <span class="w">};</span></div>
<div class="ml">        <span class="w">},</span></div>
<div class="ml">        <span class="k">created</span><span class="w">() {</span></div>
<div class="ml">            <span class="cm">// fetch the data when the view is created and the data is</span></div>
<div class="ml">            <span class="cm">// already being observed</span></div>
<div class="ml">            <span class="th">this</span><span class="w">.</span><span class="k">fetchData</span><span class="w">();</span></div>
<div class="ml">        <span class="w">},</span></div>
<div class="ml">        <span class="pr">watch</span><span class="w">: {</span></div>
<div class="ml">            <span class="cm">// call again the method if the route changes</span></div>
<div class="ml">            <span class="s">'$route'</span><span class="w">:</span> <span class="s">'fetchData'</span></div>
<div class="ml">        <span class="w">},</span></div>
<div class="ml">        <span class="pr">methods</span><span class="w">: {</span></div>
<div class="ml">            <span class="k">fetchData</span><span class="w">()</span><span class="a">:</span> <span class="vi">void</span> <span class="w">{</span></div>
<div class="ml">                <span class="th">this</span><span class="w">.</span><span class="pr">post</span> <span class="k">=</span> <span class="c">null</span><span class="w">;</span></div>
<div class="ml">                <span class="th">this</span><span class="w">.</span><span class="pr">loading</span> <span class="k">=</span> <span class="c">true</span><span class="w">;</span></div>
<div class="ml"> </div>
<div class="ml">                <span class="k">fetch</span><span class="w">(</span><span class="s">'weatherforecast'</span><span class="w">)</span></div>
<div class="ml">                    <span class="w">.</span><span class="k">then</span><span class="w">(</span><span class="e">r</span> <span class="k">=&gt;</span> <span class="e">r</span><span class="w">.</span><span class="k">json</span><span class="w">())</span></div>
<div class="ml">                    <span class="w">.</span><span class="k">then</span><span class="w">(</span><span class="e">json</span> <span class="k">=&gt;</span> <span class="w">{</span></div>
<div class="ml">                        <span class="th">this</span><span class="w">.</span><span class="pr">post</span> <span class="k">=</span> <span class="e">json</span> <span class="o">as</span> <span class="ty">Forecasts</span><span class="w">;</span></div>
<div class="ml">                        <span class="th">this</span><span class="w">.</span><span class="pr">loading</span> <span class="k">=</span> <span class="c">false</span><span class="w">;</span></div>
<div class="ml">                        <span class="k">return</span><span class="w">;</span></div>
<div class="ml">                    <span class="w">});</span></div>
<div class="ml">            <span class="w">}</span></div>
<div class="ml">        <span class="w">},</span></div>
<div class="ml">    <span class="w">});</span></div>
<div class="ml"><span class="p">&lt;/</span><span class="t">script</span><span class="p">&gt;</span></div>
</div></div>
<div class="mm" style="left:2523.3px;top:135px;width:109.5px"><div class="mmi">
<div class="ml"><span class="p">&lt;</span><span class="t">template</span><span class="p">&gt;</span></div>
<div class="ml">    <span class="p">&lt;</span><span class="t">div</span> <span class="a">class</span><span class="t">=</span><span class="s">"post"</span><span class="p">&gt;</span></div>
<div class="ml">        <span class="p">&lt;</span><span class="t">div</span> <span class="a">v-if</span><span class="w">=</span><span class="s">"</span><span class="e">loading</span><span class="s">"</span> <span class="a">class</span><span class="t">=</span><span class="s">"loading"</span><span class="p">&gt;</span></div>
<div class="ml">            <span class="x">Loading</span><span class="w">...</span></div>
<div class="ml">        <span class="p">&lt;/</span><span class="t">div</span><span class="p">&gt;</span></div>
<div class="ml"> </div>
<div class="ml">        <span class="p">&lt;</span><span class="t">div</span> <span class="a">v-if</span><span class="w">=</span><span class="s">"</span><span class="e">post</span><span class="s">"</span> <span class="a">class</span><span class="t">=</span><span class="s">"content"</span><span class="p">&gt;</span></div>
<div class="ml">            <span class="p">&lt;</span><span class="t">table</span><span class="p">&gt;</span></div>
<div class="ml">                <span class="p">&lt;</span><span class="t">thead</span><span class="p">&gt;</span></div>
<div class="ml">                    <span class="p">&lt;</span><span class="t">tr</span><span class="p">&gt;</span></div>
<div class="ml">                        <span class="p">&lt;</span><span class="t">th</span><span class="p">&gt;</span><span class="x">Date</span><span class="p">&lt;/</span><span class="t">th</span><span class="p">&gt;</span></div>
<div class="ml">                        <span class="p">&lt;</span><span class="t">th</span><span class="p">&gt;</span><span class="x">Temp. (C)</span><span class="p">&lt;/</span><span class="t">th</span><span class="p">&gt;</span></div>
<div class="ml">                        <span class="p">&lt;</span><span class="t">th</span><span class="p">&gt;</span><span class="x">Temp. (F)</span><span class="p">&lt;/</span><span class="t">th</span><span class="p">&gt;</span></div>
<div class="ml">                        <span class="p">&lt;</span><span class="t">th</span><span class="p">&gt;</span><span class="x">Summary</span><span class="p">&lt;/</span><span class="t">th</span><span class="p">&gt;</span></div>
<div class="ml">                    <span class="p">&lt;/</span><span class="t">tr</span><span class="p">&gt;</span></div>
<div class="ml">                <span class="p">&lt;/</span><span class="t">thead</span><span class="p">&gt;</span></div>
<div class="ml">                <span class="p">&lt;</span><span class="t">tbody</span><span class="p">&gt;</span></div>
<div class="ml">                    <span class="p">&lt;</span><span class="t">tr</span> <span class="a">v-for</span><span class="w">=</span><span class="s">"</span><span class="e">forecast </span><span class="o">in</span><span class="e"> post</span><span class="s">"</span> <span class="a">:key</span><span class="w">=</span><span class="s">"</span><span class="e">forecast.date</span><span class="s">"</span><span class="p">&gt;</span></div>
<div class="ml">                        <span class="p">&lt;</span><span class="t">td</span><span class="p">&gt;</span><span class="x">{{ forecast.date }}</span><span class="p">&lt;/</span><span class="t">td</span><span class="p">&gt;</span></div>
<div class="ml">                        <span class="p">&lt;</span><span class="t">td</span><span class="p">&gt;</span><span class="x">{{ forecast.temperatureC }}</span><span class="p">&lt;/</span><span class="t">td</span><span class="p">&gt;</span></div>
<div class="ml">                        <span class="p">&lt;</span><span class="t">td</span><span class="p">&gt;</span><span class="x">{{ forecast.temperatureF }}</span><span class="p">&lt;/</span><span class="t">td</span><span class="p">&gt;</span></div>
<div class="ml">                        <span class="p">&lt;</span><span class="t">td</span><span class="p">&gt;</span><span class="x">{{ forecast.summary }}</span><span class="p">&lt;/</span><span class="t">td</span><span class="p">&gt;</span></div>
<div class="ml">                    <span class="p">&lt;/</span><span class="t">tr</span><span class="p">&gt;</span></div>
<div class="ml">                <span class="p">&lt;/</span><span class="t">tbody</span><span class="p">&gt;</span></div>
<div class="ml">            <span class="p">&lt;/</span><span class="t">table</span><span class="p">&gt;</span></div>
<div class="ml">        <span class="p">&lt;/</span><span class="t">div</span><span class="p">&gt;</span></div>
<div class="ml">    <span class="p">&lt;/</span><span class="t">div</span><span class="p">&gt;</span></div>
<div class="ml"><span class="p">&lt;/</span><span class="t">template</span><span class="p">&gt;</span></div>
<div class="ml"> </div>
<div class="ml"><span class="p">&lt;</span><span class="t">script</span> <span class="a">lang</span><span class="w">=</span><span class="s">"ts"</span><span class="p">&gt;</span></div>
<div class="ml">    <span class="k">import</span> <span class="e">Vue</span> <span class="k">from</span> <span class="s">'vue'</span><span class="w">;</span></div>
<div class="ml"> </div>
<div class="ml">    <span class="k">type</span> <span class="ty">Forecasts</span> <span class="k">=</span> <span class="w">{</span></div>
<div class="ml">        <span class="t">date</span><span class="k">:</span> <span class="bt">string</span></div>
<div class="ml">    <span class="w">}[];</span></div>
<div class="ml"> </div>
<div class="ml">    <span class="k">interface</span> <span class="ty">Data</span> <span class="w">{</span></div>
<div class="ml">        <span class="t">loading</span><span class="k">:</span> <span class="bt">boolean</span><span class="w">,</span></div>
<div class="ml">        <span class="t">post</span><span class="k">:</span> <span class="bt">null</span> <span class="k">|</span> <span class="ty">Forecasts</span></div>
<div class="ml">    <span class="w">}</span></div>
<div class="ml"> </div>
<div class="ml">    <span class="oi">export</span> <span class="o">default</span> <span class="k">Vue</span><span class="w">.</span><span class="k">extend</span><span class="w">({</span></div>
<div class="ml">        <span class="k">data</span><span class="w">()</span><span class="a">:</span> <span class="ty">Data</span> <span class="w">{</span></div>
<div class="ml">            <span class="k">return</span> <span class="w">{</span></div>
<div class="ml">                <span class="pr">loading</span><span class="w">:</span> <span class="c">false</span><span class="w">,</span></div>
<div class="ml">                <span class="pr">post</span><span class="w">:</span> <span class="c">null</span></div>
<div class="ml">            <span class="w">};</span></div>
<div class="ml">        <span class="w">},</span></div>
<div class="ml">        <span class="k">created</span><span class="w">() {</span></div>
<div class="ml">            <span class="cm">// fetch the data when the view is created and the data is</span></div>
<div class="ml">            <span class="cm">// already being observed</span></div>
<div class="ml">            <span class="th">this</span><span class="w">.</span><span class="k">fetchData</span><span class="w">();</span></div>
<div class="ml">        <span class="w">},</span></div>
<div class="ml">        <span class="pr">watch</span><span class="w">: {</span></div>
<div class="ml">            <span class="cm">// call again the method if the route changes</span></div>
<div class="ml">            <span class="s">'$route'</span><span class="w">:</span> <span class="s">'fetchData'</span></div>
<div class="ml">        <span class="w">},</span></div>
<div class="ml">        <span class="pr">methods</span><span class="w">: {</span></div>
<div class="ml">            <span class="k">fetchData</span><span class="w">()</span><span class="a">:</span> <span class="vi">void</span> <span class="w">{</span></div>
<div class="ml">                <span class="th">this</span><span class="w">.</span><span class="pr">post</span> <span class="k">=</span> <span class="c">null</span><span class="w">;</span></div>
<div class="ml">                <span class="th">this</span><span class="w">.</span><span class="pr">loading</span> <span class="k">=</span> <span class="c">true</span><span class="w">;</span></div>
<div class="ml"> </div>
<div class="ml">                <span class="k">fetch</span><span class="w">(</span><span class="s">'weatherforecast'</span><span class="w">)</span></div>
<div class="ml">                    <span class="w">.</span><span class="k">then</span><span class="w">(</span><span class="e">r</span> <span class="k">=&gt;</span> <span class="e">r</span><span class="w">.</span><span class="k">json</span><span class="w">())</span></div>
<div class="ml">                    <span class="w">.</span><span class="k">then</span><span class="w">(</span><span class="e">json</span> <span class="k">=&gt;</span> <span class="w">{</span></div>
<div class="ml">                        <span class="th">this</span><span class="w">.</span><span class="pr">post</span> <span class="k">=</span> <span class="e">json</span> <span class="o">as</span> <span class="ty">Forecasts</span><span class="w">;</span></div>
<div class="ml">                        <span class="th">this</span><span class="w">.</span><span class="pr">loading</span> <span class="k">=</span> <span class="c">false</span><span class="w">;</span></div>
<div class="ml">                        <span class="k">return</span><span class="w">;</span></div>
<div class="ml">                    <span class="w">});</span></div>
<div class="ml">            <span class="w">}</span></div>
<div class="ml">        <span class="w">},</span></div>
<div class="ml">    <span class="w">});</span></div>
<div class="ml"><span class="p">&lt;/</span><span class="t">script</span><span class="p">&gt;</span></div>
</div></div>
</div></div>
</body></html>
